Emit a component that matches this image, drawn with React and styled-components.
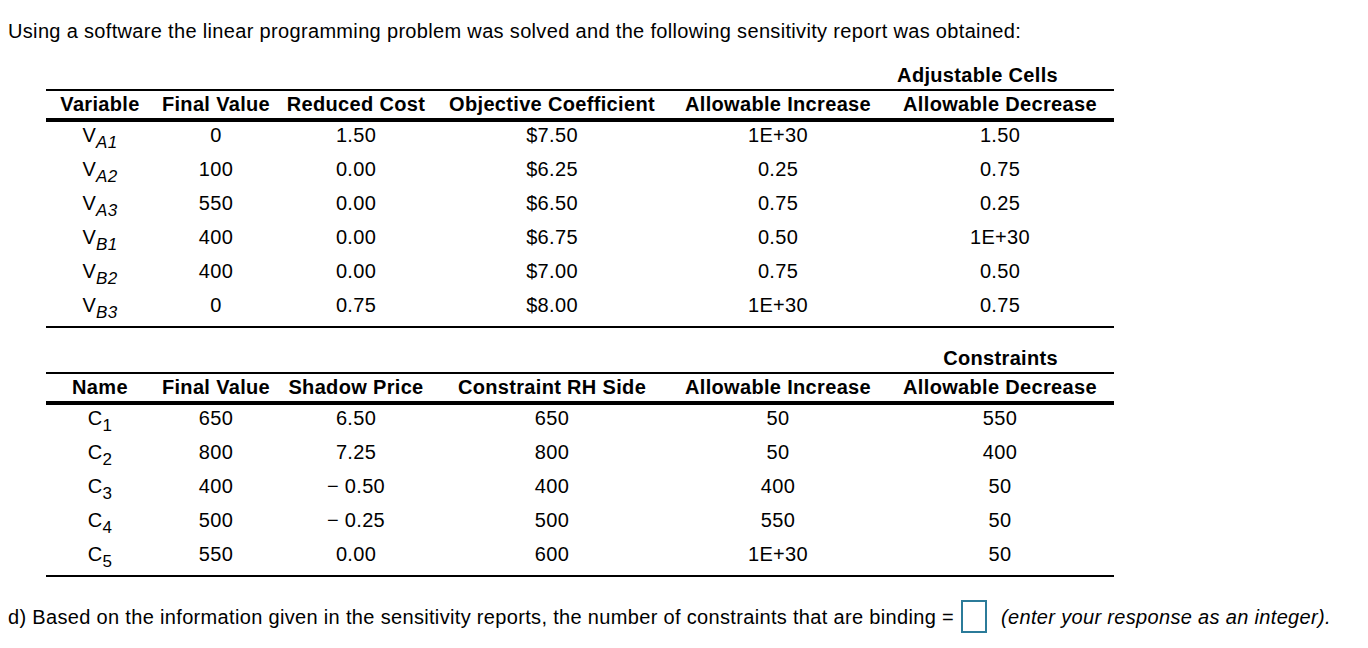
import React from 'react';
import styled, {createGlobalStyle} from 'styled-components';

const COLS = '108px 124px 156px 236px 216px 228px';

const variables = [
    {name: 'V', sub: 'A1', italic: true, cells: ['0', '1.50', '$7.50', '1E+30', '1.50']},
    {name: 'V', sub: 'A2', italic: true, cells: ['100', '0.00', '$6.25', '0.25', '0.75']},
    {name: 'V', sub: 'A3', italic: true, cells: ['550', '0.00', '$6.50', '0.75', '0.25']},
    {name: 'V', sub: 'B1', italic: true, cells: ['400', '0.00', '$6.75', '0.50', '1E+30']},
    {name: 'V', sub: 'B2', italic: true, cells: ['400', '0.00', '$7.00', '0.75', '0.50']},
    {name: 'V', sub: 'B3', italic: true, cells: ['0', '0.75', '$8.00', '1E+30', '0.75']},
];

const constraints = [
    {name: 'C', sub: '1', cells: ['650', '6.50', '650', '50', '550']},
    {name: 'C', sub: '2', cells: ['800', '7.25', '800', '50', '400']},
    {name: 'C', sub: '3', cells: ['400', '\u2212 0.50', '400', '400', '50']},
    {name: 'C', sub: '4', cells: ['500', '\u2212 0.25', '500', '550', '50']},
    {name: 'C', sub: '5', cells: ['550', '0.00', '600', '1E+30', '50']},
];

const Report = ({label, top, headers, rows}) => (
    <Block $top={top}>
        <GroupLabel>{label}</GroupLabel>
        <HeadRow>
            {headers.map((h) => <span key={h}>{h}</span>)}
        </HeadRow>
        <Rows>
            {rows.map((row, idx) => (
                <DataRow key={idx}>
                    <span>
                        {row.name}
                        <Sub $italic={row.italic}>{row.sub}</Sub>
                    </span>
                    {row.cells.map((c, i) => <span key={i}>{c}</span>)}
                </DataRow>
            ))}
        </Rows>
    </Block>
);

const App = () => (
    <>
        <GlobalStyle />
        <Page>
            <Intro>
                Using a software the linear programming problem was solved and the following sensitivity report was obtained:
            </Intro>
            <Report
                label="Adjustable Cells"
                top={20}
                headers={['Variable', 'Final Value', 'Reduced Cost', 'Objective Coefficient', 'Allowable Increase', 'Allowable Decrease']}
                rows={variables}
            />
            <Report
                label="Constraints"
                top={18}
                headers={['Name', 'Final Value', 'Shadow Price', 'Constraint RH Side', 'Allowable Increase', 'Allowable Decrease']}
                rows={constraints}
            />
            <Question>
                d) Based on the information given in the sensitivity reports, the number of constraints that are binding =
                <AnswerBox />
                <Hint>(enter your response as an integer).</Hint>
            </Question>
        </Page>
    </>
);

export default App;

// Styles
const GlobalStyle = createGlobalStyle`
    body {
        margin: 0;
        background: #fff;
        color: #000;
        font-family: "Liberation Sans", Arial, sans-serif;
    }
`

const Page = styled.div`
    padding: 19px 0 0 8px;
    font-size: 20px;
    letter-spacing: 0.33px;
`

const Intro = styled.p`
    margin: 0;
    line-height: 24px;
`

const Block = styled.div`
    margin: ${(p) => p.$top}px 0 0 38px;
    width: 1068px;
`

const GroupLabel = styled.div`
    text-align: right;
    padding: 0 56px 2px 0;
    line-height: 24px;
    font-weight: bold;
`

const HeadRow = styled.div`
    display: grid;
    grid-template-columns: ${COLS};
    align-items: center;
    height: 27px;
    border-top: 2px solid #000;
    border-bottom: 4px solid #000;
    text-align: center;
    font-weight: bold;
    white-space: nowrap;
`

const Rows = styled.div`
    border-bottom: 2px solid #000;
`

const DataRow = styled.div`
    display: grid;
    grid-template-columns: ${COLS};
    height: 34px;
    box-sizing: border-box;
    padding-bottom: 8px;
    line-height: 26px;
    text-align: center;
    white-space: nowrap;
`

const Sub = styled.sub`
    font-size: 17px;
    font-style: ${(p) => (p.$italic ? 'italic' : 'normal')};
    vertical-align: -6px;
    line-height: 0;
`

const Question = styled.div`
    display: flex;
    align-items: center;
    margin-top: 23px;
    line-height: 24px;
    white-space: nowrap;
`

const AnswerBox = styled.span`
    display: inline-block;
    width: 26px;
    height: 33px;
    box-sizing: border-box;
    border: 2px solid #2b7b99;
    margin: 0 14px 0 7px;
`

const Hint = styled.span`
    font-style: italic;
`
